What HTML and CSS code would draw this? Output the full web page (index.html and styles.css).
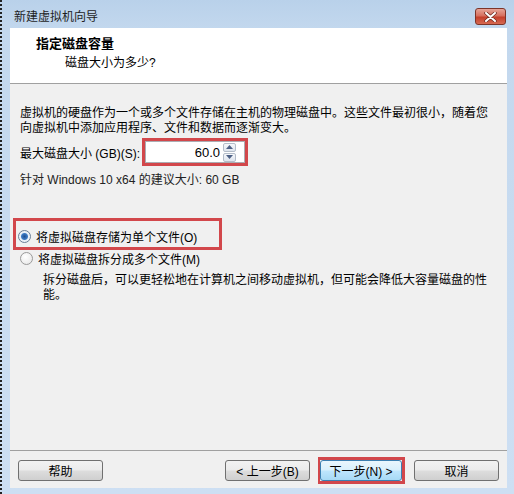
FILE: index.html
```html
<!DOCTYPE html>
<html lang="zh-CN">
<head>
    <meta charset="UTF-8">
    <meta name="viewport" content="width=device-width, initial-scale=1.0">
    <title>新建虚拟机向导</title>
    <link rel="stylesheet" href="styles.css">
</head>
<body>
<div class="window">
    <div class="titlebar">
        <span class="title">新建虚拟机向导</span>
        <div class="close">
            <svg width="13" height="10" viewBox="0 0 13 10">
                <path d="M2 1 L11 9 M11 1 L2 9" stroke="#6b2a20" stroke-width="3.4" stroke-linecap="round"/>
                <path d="M2 1 L11 9 M11 1 L2 9" stroke="#fff" stroke-width="2" stroke-linecap="round"/>
            </svg>
        </div>
    </div>
    <div class="dialog">
        <div class="header">
            <div class="head_title">指定磁盘容量</div>
            <div class="head_sub">磁盘大小为多少?</div>
        </div>
        <div class="content">
            <p class="intro">虚拟机的硬盘作为一个或多个文件存储在主机的物理磁盘中。这些文件最初很小，随着您<br>向虚拟机中添加应用程序、文件和数据而逐渐变大。</p>
            <div class="size_row">
                <label for="size">最大磁盘大小 (GB)(S):</label>
                <div class="mark spin_mark">
                    <div class="spin">
                        <input type="text" id="size" value="60.0">
                        <div class="arrows">
                            <div class="arrow">
                                <svg width="7" height="4" viewBox="0 0 7 4"><path d="M0 4 L3.5 0 L7 4 Z" fill="#4d6185"/></svg>
                            </div>
                            <div class="arrow">
                                <svg width="7" height="4" viewBox="0 0 7 4"><path d="M0 0 L3.5 4 L7 0 Z" fill="#4d6185"/></svg>
                            </div>
                        </div>
                    </div>
                </div>
            </div>
            <p class="hint">针对 Windows 10 x64 的建议大小: 60 GB</p>
            <div class="mark radio_mark">
                <div class="radio_row">
                    <span class="radio checked"></span>
                    <span>将虚拟磁盘存储为单个文件(O)</span>
                </div>
            </div>
            <div class="radio_row second">
                <span class="radio"></span>
                <span>将虚拟磁盘拆分成多个文件(M)</span>
            </div>
            <p class="desc">拆分磁盘后，可以更轻松地在计算机之间移动虚拟机，但可能会降低大容量磁盘的性<br>能。</p>
        </div>
        <div class="footer">
            <button type="button" class="btn">帮助</button>
            <div class="nav">
                <button type="button" class="btn">&lt; 上一步(B)</button>
                <div class="mark next_mark">
                    <button type="button" class="btn btn_default">下一步(N) &gt;</button>
                </div>
                <button type="button" class="btn cancel">取消</button>
            </div>
        </div>
    </div>
</div>
</body>
</html>
```

FILE: styles.css
```css
body {
    margin: 0;
    font-family: "Liberation Sans", "Noto Sans CJK SC", sans-serif;
    font-size: 12px;
    color: #000;
}
.window {
    width: 512px;
    height: 494px;
    border-left: 2px dotted #222;
    background: linear-gradient(to bottom, #b9d1ea 0px, #c3d8ee 30px, #cddff3 100%);
    display: flex;
    flex-direction: column;
}
.titlebar {
    height: 28px;
    display: flex;
    align-items: flex-start;
    justify-content: space-between;
    padding: 0 8px 0 12px;
}
.title {
    margin-top: 10px;
    line-height: 15px;
    color: #1e1e1e;
}
.close {
    margin-top: 8px;
    width: 29px;
    height: 15px;
    border: 1px solid #7d3428;
    border-radius: 3px;
    background: linear-gradient(to bottom, #e6a497 0%, #d6705f 45%, #c4402c 55%, #d66a52 100%);
    display: flex;
    align-items: center;
    justify-content: center;
}
.dialog {
    flex: 1;
    margin: 0 7px 6px 8px;
    background: #f0f0f0;
    display: flex;
    flex-direction: column;
}
.header {
    height: 55px;
    background: #fff;
    border-bottom: 1px solid #a0a0a0;
    padding-left: 26px;
}
.head_title {
    margin-top: 8px;
    font-weight: bold;
    font-size: 13px;
    line-height: 16px;
}
.head_sub {
    margin-top: 3px;
    padding-left: 29px;
    line-height: 16px;
}
.content {
    flex: 1;
    padding: 0 0 0 10px;
}
.intro {
    margin: 22px 0 0 0;
    line-height: 15px;
}
.size_row {
    display: flex;
    align-items: center;
    margin-top: 2px;
}
.size_row label {
    width: 122px;
}
.mark {
    border: 3px solid #d2474b;
}
.spin {
    width: 98px;
    height: 20px;
    border: 1px solid #abadb3;
    background: #fff;
    display: flex;
    align-items: center;
}
.spin input {
    width: 74px;
    border: none;
    outline: none;
    text-align: right;
    font: inherit;
    font-size: 13px;
    padding: 0;
    margin: 0 3px 0 0;
    background: transparent;
}
.arrows {
    display: flex;
    flex-direction: column;
    gap: 1px;
}
.arrow {
    width: 13px;
    height: 9px;
    border: 1px solid #b4bdc9;
    border-radius: 2px;
    background: linear-gradient(to bottom, #f6f8fb, #dfe5ee);
    display: flex;
    align-items: center;
    justify-content: center;
    box-sizing: border-box;
}
.hint {
    margin: 7px 0 0 0;
    line-height: 15px;
    color: #222;
}
.radio_mark {
    width: 201px;
    margin: 30px 0 0 -7px;
    padding: 5px 0 1px 2px;
}
.radio_row {
    display: flex;
    align-items: center;
    gap: 5px;
    height: 20px;
}
.second {
    height: 16px;
}
.radio {
    width: 11px;
    height: 11px;
    border: 1px solid #9a9a9a;
    border-radius: 50%;
    background: radial-gradient(circle at 40% 35%, #ffffff, #e4e4e4);
}
.checked {
    border-color: #6a7e96;
    background: radial-gradient(circle, #1f4d8f 0, #3d7bc4 3px, #e8eef6 4px, #f8f8f8 100%);
}
.desc {
    margin: 7px 0 0 23px;
    line-height: 15px;
}
.footer {
    height: 38px;
    border-top: 1px solid #a0a0a0;
    display: flex;
    justify-content: space-between;
    align-items: flex-start;
    padding: 9px 8px 0 8px;
    box-sizing: border-box;
}
.nav {
    display: flex;
    align-items: flex-start;
}
.btn {
    width: 85px;
    height: 21px;
    border: 1px solid #707070;
    border-radius: 3px;
    background: linear-gradient(to bottom, #f2f2f2 0%, #ebebeb 48%, #dddddd 52%, #cfcfcf 100%);
    font: inherit;
    padding: 0;
    color: #000;
}
.nav .next_mark {
    margin: -3px 0 0 8px;
    border-width: 3px 3px 3px 2px;
}
.nav .next_mark .btn {
    width: 82px;
    border-color: #3c7fb1;
    background: linear-gradient(to bottom, #eaf6fd 0%, #d9f0fc 48%, #bee6fd 52%, #a7d9f5 100%);
}
.nav .cancel {
    margin-left: 9px;
}
```
